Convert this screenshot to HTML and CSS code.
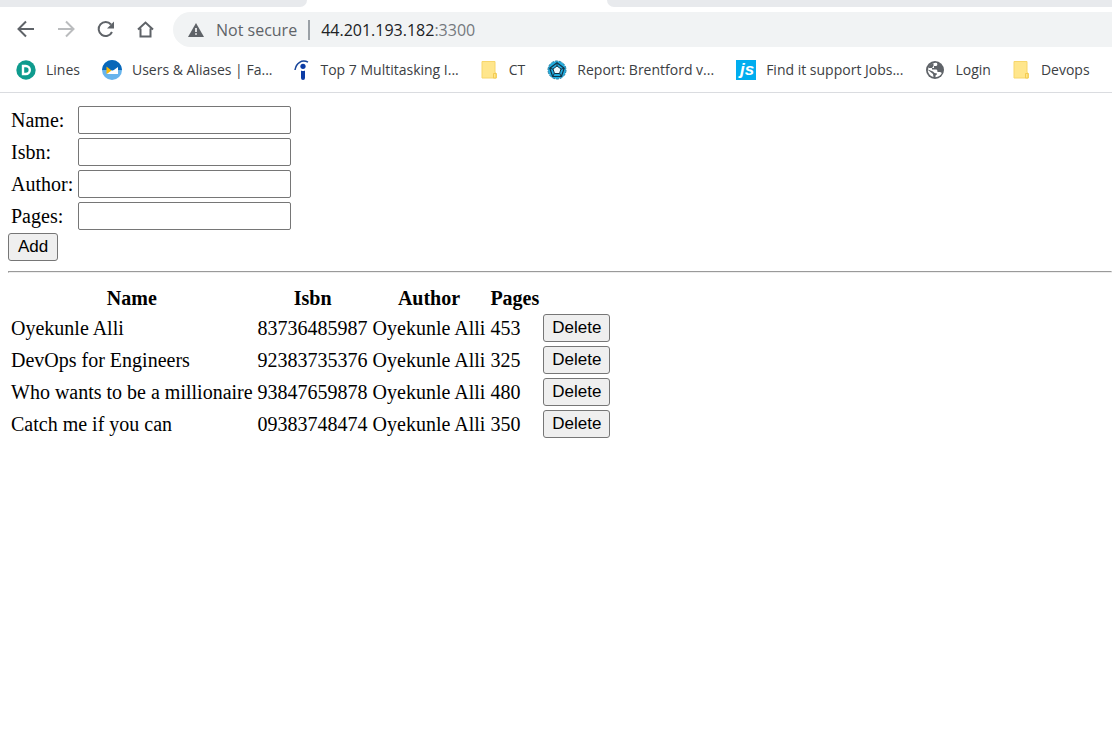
FILE: index.html
```
<!DOCTYPE html>
<html lang="en">
<head>
<meta charset="utf-8">
<title>Books</title>
<link rel="stylesheet" href="styles.css">
</head>
<body>
<header class="browser">
  <div class="tabs"><span class="tab tab-left"></span><span class="tab tab-right"></span></div>
  <div class="toolbar">
    <nav class="nav">
      <button class="tool" aria-label="Back"><svg width="20" height="20" viewBox="0 0 20 20"><path d="M18 9H3M10 1.500 2.500 9l7.500 7.500" fill="none" stroke="#5f6368" stroke-width="2"/></svg></button>
      <button class="tool" aria-label="Forward"><svg width="20" height="20" viewBox="0 0 20 20"><path d="M2 9h15M10 1.500 17.500 9 10 16.500" fill="none" stroke="#babcbe" stroke-width="2"/></svg></button>
      <button class="tool" aria-label="Reload"><svg width="20" height="20" viewBox="0 0 20 20"><path d="M16 12A7 7 0 1 1 15 4.500" fill="none" stroke="#5f6368" stroke-width="2"/><path d="M18 1.500v7h-7z" fill="#5f6368"/></svg></button>
      <button class="tool" aria-label="Home"><svg width="20" height="20" viewBox="0 0 20 20"><path d="M2 9.500 9.500 2.500l7.500 7M4.500 8.500v8h10v-8" fill="none" stroke="#5f6368" stroke-width="2"/></svg></button>
    </nav>
    <div class="address">
      <svg class="warn" width="16" height="14" viewBox="0 0 16 14"><path d="M8 0 16 14H0z" fill="#5f6368"/><path d="M7.200 5h1.600v4H7.200zm0 5.200h1.600v1.600H7.200z" fill="#fff"/></svg>
      <span class="insecure">Not secure</span>
      <span class="bar"></span>
      <span class="url">44.201.193.182<span class="port">:3300</span></span>
    </div>
  </div>
  <nav class="bookmarks">
    <a class="bookmark" href="#"><svg width="20" height="20" viewBox="0 0 20 20"><circle cx="10" cy="10" r="9.700" fill="#0f9b8e"/><path d="M7 6h2.800a4 4 0 0 1 0 8H7z" fill="none" stroke="#fff" stroke-width="2.400"/></svg><span>Lines</span></a>
    <a class="bookmark" href="#"><svg width="20" height="20" viewBox="0 0 20 20"><circle cx="10" cy="10" r="10" fill="#67b4ec"/><path d="M0 10a10 10 0 0 1 20 0z" fill="#0867b9"/><path d="M4.500 14 9 10.500l1.500.5L16 7v7z" fill="#fff"/><path d="M4.500 6.500 9.500 10.500 4.500 14z" fill="#ffb900"/></svg><span>Users &amp; Aliases | Fa...</span></a>
    <a class="bookmark" href="#"><svg width="16" height="20" viewBox="1 0 16 20"><path d="M2 10C3 3 9-1 15 2.200" fill="none" stroke="#164499" stroke-width="1.500"/><circle cx="10" cy="6.300" r="2.600" fill="#0b3ba5"/><path d="M8 10.500q2 1 4 0V18q0 2-2 2t-2-2z" fill="#0b3ba5"/></svg><span>Top 7 Multitasking I...</span></a>
    <a class="bookmark folder" href="#"><svg width="16" height="20" viewBox="0 0 16 20"><path d="M1 1.500h13v11l1.500 1V18H1z" fill="#ffe68c" stroke="#f7d66b"/><path d="M12.500 18v-4.500h2.500V18z" fill="#ffe68c" stroke="#f3cb52"/></svg><span>CT</span></a>
    <a class="bookmark" href="#"><svg width="20" height="20" viewBox="0 0 20 20"><circle cx="10" cy="10" r="9" fill="#22aee0" stroke="#1f7da3" stroke-dasharray="3 1"/><path d="m10 2.800 7.200 5.400-2.800 8.300H5.600L2.800 8.200z" fill="none" stroke="#123247" stroke-width="1.200"/><path d="M10 3v3M3 8.200l3 1M17 8.200l-3 1M6 16l1.500-3M14 16l-1.500-3" stroke="#123247"/><path d="m10 6 4 3-1.500 4.500h-5L6 9z" fill="#eefaff" stroke="#123247"/></svg><span>Report: Brentford v...</span></a>
    <a class="bookmark" href="#"><svg width="20" height="20" viewBox="0 0 20 20"><path fill="#00adef" d="M0 0h20v20H0z"/><text class="js" x="4" y="15">js</text></svg><span>Find it support Jobs...</span></a>
    <a class="bookmark" href="#"><svg width="20" height="20" viewBox="0 0 20 20"><circle cx="10" cy="10" r="9" fill="#5f6368"/><path d="M8 3.500Q10 2.500 12 3q1 2.500-1 3H9v2H7v1.500h4.500q1 0 1 2.500H14q1.500-.5 2.800 1Q15 17 10.500 17.200V15.500q1.500-.5 1.500-2-3 0-4-2L3 9.500l-.2 1.500Q4 16 8.500 17L8 14 3 10Q3 5.500 8 3.500z" fill="#fff"/><path d="M3.500 7.500Q5 4 8.500 3.500V6L7 8H4z" fill="#5f6368"/></svg><span>Login</span></a>
    <a class="bookmark folder" href="#"><svg width="16" height="20" viewBox="0 0 16 20"><path d="M1 1.500h13v11l1.500 1V18H1z" fill="#ffe68c" stroke="#f7d66b"/><path d="M12.500 18v-4.500h2.500V18z" fill="#ffe68c" stroke="#f3cb52"/></svg><span>Devops</span></a>
  </nav>
</header>
<main class="page">
  <form>
    <table class="grid">
      <tr><td><label for="name">Name:</label></td><td><input class="field" id="name" type="text"></td></tr>
      <tr><td><label for="isbn">Isbn:</label></td><td><input class="field" id="isbn" type="text"></td></tr>
      <tr><td><label for="author">Author:</label></td><td><input class="field" id="author" type="text"></td></tr>
      <tr><td><label for="pages">Pages:</label></td><td><input class="field" id="pages" type="text"></td></tr>
    </table>
    <button class="btn add" type="button">Add</button>
  </form>
  <hr class="rule">
  <table class="grid books">
    <thead><tr><th>Name</th><th>Isbn</th><th>Author</th><th>Pages</th><td></td></tr></thead>
    <tbody>
      <tr><td>Oyekunle Alli</td><td>83736485987</td><td>Oyekunle Alli</td><td>453</td><td><button class="btn" type="button">Delete</button></td></tr>
      <tr><td>DevOps for Engineers</td><td>92383735376</td><td>Oyekunle Alli</td><td>325</td><td><button class="btn" type="button">Delete</button></td></tr>
      <tr><td>Who wants to be a millionaire</td><td>93847659878</td><td>Oyekunle Alli</td><td>480</td><td><button class="btn" type="button">Delete</button></td></tr>
      <tr><td>Catch me if you can</td><td>09383748474</td><td>Oyekunle Alli</td><td>350</td><td><button class="btn" type="button">Delete</button></td></tr>
    </tbody>
  </table>
</main>
</body>
</html>
```
FILE: styles.css
```
* { box-sizing: border-box; }
body { margin: 0; background: #fff; color: #000; font: 20px/24px "Liberation Serif", serif; }
.browser { font-family: "Open Sans", sans-serif; border-bottom: 1px solid #dadce0; }
.tabs { display: flex; justify-content: space-between; height: 7px; }
.tab { background: #e8eaed; }
.tab-left { width: 307px; border-bottom-right-radius: 8px; }
.tab-right { width: 505px; border-bottom-left-radius: 8px; }
.toolbar { display: flex; align-items: center; padding: 5px 0 0 16px; gap: 17px; }
.nav { display: flex; gap: 20px; }
.tool { display: flex; padding: 0; border: 0; background: none; }
.address { display: flex; flex: 1; align-items: center; height: 35px; padding-left: 15px; background: #f1f3f4; border-radius: 18px 0 0 18px; font-size: 16px; white-space: nowrap; }
.insecure { margin-left: 12px; color: #5f6368; }
.bar { width: 2px; height: 20px; margin: 0 11px; background: #9aa0a6; }
.url { color: #202124; }
.port { color: #75797e; }
.bookmarks { display: flex; align-items: center; gap: 22px; height: 45px; padding-left: 16px; overflow: hidden; font-size: 14px; white-space: nowrap; }
.bookmark { display: flex; align-items: center; gap: 10px; color: #3c4043; text-decoration: none; }
.folder { gap: 12px; }
.bookmark svg { flex: none; overflow: visible; }
.js { font: italic bold 17px "Liberation Sans", sans-serif; fill: #fff; }
.page { padding: 10px 0 10px 8px; }
.grid { border-spacing: 2px; }
.grid td, .grid th { padding: 1px 2px 1px 1px; }
.field { display: block; width: 213px; height: 28px; border: 1px solid #767676; border-radius: 2px; padding: 1px 2px; font: 17px "Liberation Sans", sans-serif; }
.btn { display: block; height: 28px; padding: 0 8px; border: 1px solid #767676; border-radius: 3px; background: #efefef; color: #000; font: 17px "Liberation Sans", sans-serif; }
.add { padding: 0 9px; }
.rule { margin: 10px 0; border: 1px solid; border-color: #9a9a9a #eee #eee #9a9a9a; }
.books th:nth-child(4) { padding-right: 1px; }
```
